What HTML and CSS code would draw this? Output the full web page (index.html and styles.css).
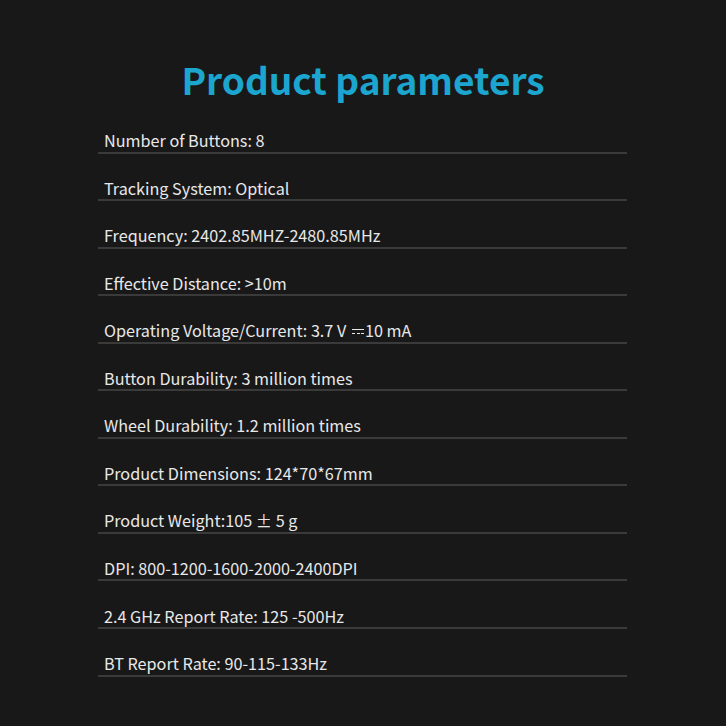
FILE: index.html
```html
<!DOCTYPE html>
<html>
<head>
<meta charset="utf-8">
<link rel="stylesheet" href="styles.css">
</head>
<body>
<div class="page">
  <h1 class="title">Product parameters</h1>
  <ul class="params">
    <li class="row">Number of Buttons: 8</li>
    <li class="row">Tracking System: Optical</li>
    <li class="row">Frequency: 2402.85MHZ-2480.85MHz</li>
    <li class="row">Effective Distance: &gt;10m</li>
    <li class="row">Operating Voltage/Current: 3.7 V&nbsp;<span class="dc" aria-label="⎓"></span>10 mA</li>
    <li class="row">Button Durability: 3 million times</li>
    <li class="row">Wheel Durability: 1.2 million times</li>
    <li class="row">Product Dimensions: 124*70*67mm</li>
    <li class="row">Product Weight:105 ± 5 g</li>
    <li class="row">DPI: 800-1200-1600-2000-2400DPI</li>
    <li class="row">2.4 GHz Report Rate: 125 -500Hz</li>
    <li class="row">BT Report Rate: 90-115-133Hz</li>
  </ul>
</div>
</body>
</html>
```
FILE: styles.css
```css
html, body {
  margin: 0;
  padding: 0;
  background: #181818;
}
.page {
  width: 726px;
  height: 726px;
  overflow: hidden;
  background: #181818;
  font-family: "Noto Sans CJK SC", "Noto Sans", sans-serif;
  padding-top: 54px;
  box-sizing: border-box;
}
.title {
  margin: 0;
  text-align: center;
  font-size: 37px;
  line-height: 50px;
  font-weight: 700;
  color: #1ca6cf;
}
.params {
  list-style: none;
  margin: 2px 0 0 98px;
  padding: 0;
  width: 529px;
}
.row {
  height: 47.55px;
  box-sizing: border-box;
  border-bottom: 2px solid #3a3a3a;
  display: flex;
  align-items: flex-end;
  padding: 0 0 1.5px 6px;
  font-size: 16.2px;
  line-height: 20px;
  color: #e8e8e8;
  white-space: pre;
}
.dc {
  display: inline-block;
  width: 12px;
  height: 5px;
  margin: 0 1px 6px 2px;
  align-self: flex-end;
  border-top: 1.5px solid #e8e8e8;
  box-sizing: border-box;
  background: repeating-linear-gradient(90deg, #e8e8e8 0 3px, transparent 3px 4.5px) bottom / 100% 1.5px no-repeat;
}
```
